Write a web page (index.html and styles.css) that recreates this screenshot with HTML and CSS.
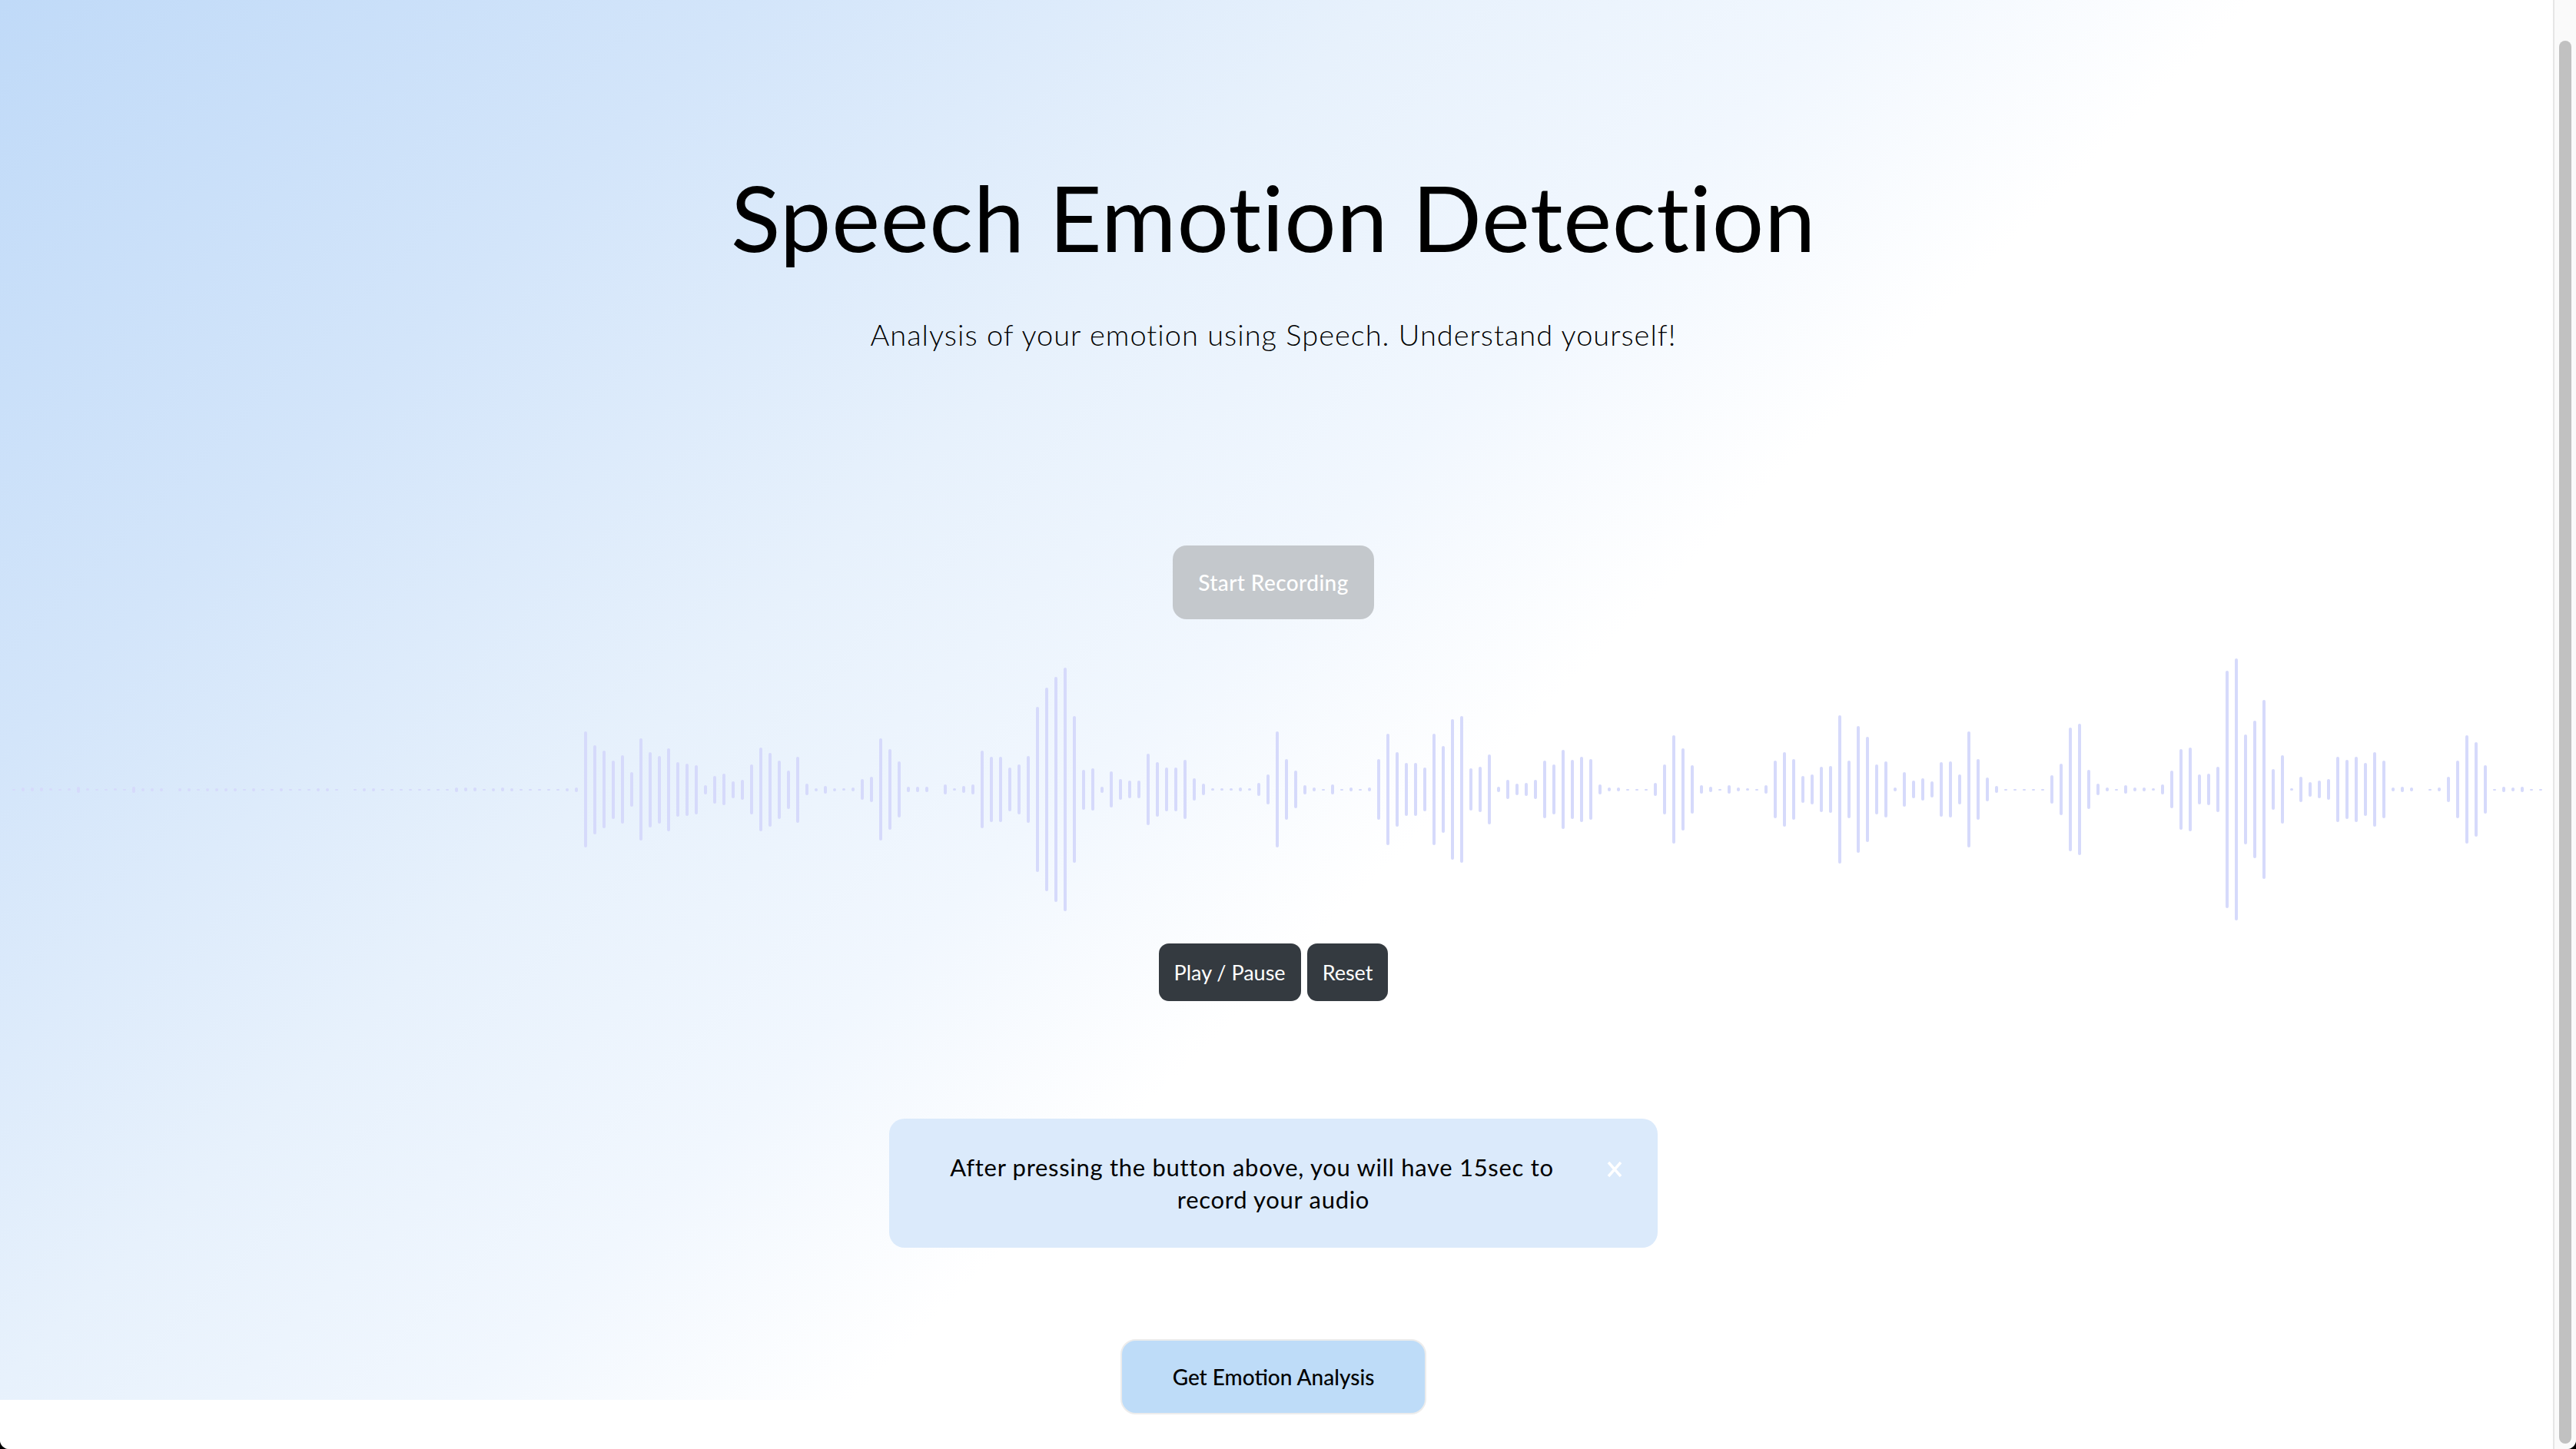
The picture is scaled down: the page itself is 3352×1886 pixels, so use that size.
FILE: index.html
```html
<!DOCTYPE html>
<html lang="en">
<head>
<meta charset="utf-8">
<title>Speech Emotion Detection</title>
<link rel="stylesheet" href="styles.css">
</head>
<body>
<div class="window">
  <main class="page">
    <section class="hero">
      <h1 class="title">Speech Emotion Detection</h1>
      <p class="subtitle">Analysis of your emotion using Speech. Understand yourself!</p>
      <button class="btn btn-record" disabled>Start Recording</button>
      <div class="waveform" id="waveform"></div>
      <div class="controls">
        <button class="btn btn-dark">Play / Pause</button>
        <button class="btn btn-dark">Reset</button>
      </div>
      <div class="alert" role="alert">
        <span class="alert-line alert-line-first">After pressing the button above, you will have 15sec to</span>
        <span class="alert-line">record your audio</span>
        <button class="alert-close" aria-label="Close">
          <svg viewBox="0 0 22 22" width="22" height="22"><path d="M3 2 L19 20 M19 2 L3 20" stroke="#ffffff" stroke-width="3.5" stroke-linecap="butt" fill="none"/></svg>
        </button>
      </div>
      <button class="btn btn-analyze">Get Emotion Analysis</button>
    </section>
  </main>
  <aside class="scrollbar"><div class="scrollbar-thumb"></div></aside>
</div>
<script src="wave.js"></script>
</body>
</html>
```
FILE: styles.css
```css
html {
  background: #000;
}
body {
  margin: 0;
  font-family: "Lato", "Noto Sans", sans-serif;
  font-variant-ligatures: none;
}
.window {
  display: flex;
  height: 1886px;
  overflow: hidden;
  background: #fff;
  border-radius: 0 0 12px 12px;
}
.page {
  flex: 1 1 auto;
  min-width: 0;
  background: #fff;
}
.hero {
  height: 1822px;
  box-sizing: border-box;
  padding: 211px 8px 0 0;
  display: flex;
  flex-direction: column;
  align-items: center;
  background: linear-gradient(135deg, #c0daf8 0%, #d3e5fa 19%, #e7f1fc 35%, #f1f7fe 47%, #ffffff 57%);
}
.hero > * {
  flex-shrink: 0;
}
.title {
  margin: 0;
  font-size: 119px;
  font-weight: 400;
  line-height: 1.2;
  letter-spacing: 0.7px;
  color: #000;
}
.subtitle {
  margin: 54px 0 0;
  font-size: 38px;
  font-weight: 300;
  line-height: 54px;
  letter-spacing: 1px;
  color: #000;
}
.btn {
  font-family: inherit;
  border: 0;
  padding: 0;
  cursor: pointer;
}
.btn-record {
  margin-top: 248px;
  width: 262px;
  height: 96px;
  border-radius: 18px;
  background: #c4c8cc;
  color: #fff;
  font-size: 28px;
  font-weight: 500;
  letter-spacing: 0.4px;
}
.waveform {
  align-self: stretch;
  height: 400px;
  margin-top: 22px;
  display: flex;
  align-items: center;
  gap: 8px;
  padding-left: 16px;
  overflow: hidden;
}
.bar {
  flex: 0 0 4px;
  border-radius: 2px;
  background: #d6dafb;
}
.controls {
  display: flex;
  gap: 8px;
}
.btn-dark {
  height: 75px;
  padding: 0 20px;
  border-radius: 13px;
  background: #343a40;
  color: #fff;
  font-size: 27px;
}
.alert {
  position: relative;
  margin-top: 153px;
  width: 1000px;
  height: 168px;
  box-sizing: border-box;
  display: flex;
  flex-direction: column;
  align-items: center;
  justify-content: center;
  background: #dbeafb;
  border-radius: 20px;
  font-size: 31px;
  line-height: 42px;
  letter-spacing: 0.7px;
  color: #000;
}
.alert-line-first {
  margin-right: 56px;
}
.alert-close {
  position: absolute;
  top: 55px;
  right: 45px;
  width: 22px;
  height: 22px;
  padding: 0;
  border: 0;
  background: none;
  display: flex;
}
.btn-analyze {
  margin-top: 119px;
  width: 398px;
  height: 98px;
  border: 2px solid #ececec;
  border-radius: 20px;
  background: #bedcf8;
  color: #000;
  font-size: 28px;
  font-weight: 500;
}
.scrollbar {
  flex: 0 0 30px;
  box-sizing: border-box;
  background: #fafafa;
  border-left: 2px solid #e6e6e6;
  padding: 53px 6px 7px;
}
.scrollbar-thumb {
  height: 100%;
  border-radius: 8px;
  background: #c1c1c1;
}
```
FILE: wave.js
```js
(function () {
  var heights = [
    2,5,5,5,3,2,3,8,3,2,
    2,3,2,8,4,4,4,0,4,4,
    2,4,4,4,4,2,4,2,2,4,
    2,2,2,4,4,2,0,2,4,4,
    2,2,2,2,2,2,2,2,6,5,
    5,2,4,5,4,2,2,2,2,2,
    4,6,
    151,116,101,76,89,45,133,98,88,108,
    71,68,64,12,36,41,22,26,65,109,
    96,76,50,86,15,4,10,4,3,5,
    27,33,133,105,73,7,7,7,0,13,
    3,9,13,101,85,85,57,65,87,215,
    265,293,317,191,52,55,8,47,27,23,
    23,93,71,57,57,77,29,15,3,3,
    3,5,3,17,39,151,79,49,12,5,
    2,13,2,5,2,5,79,145,97,69,
    69,57,145,113,183,191,55,59,91,7,
    25,15,17,25,75,65,103,77,85,79,
    13,5,5,2,2,2,17,65,141,107,
    63,11,7,2,11,5,3,2,11,75,
    97,79,35,39,59,61,193,75,165,137,
    65,73,5,45,23,29,21,71,73,39,
    151,79,31,9,2,2,2,2,2,37,
    67,161,171,51,15,5,2,11,5,5,
    3,13,49,105,109,39,41,59,309,341,
    143,179,233,53,89,3,33,19,23,27,
    85,77,85,69,97,75,5,7,5,0,
    2,5,33,75,141,123,63,2,7,5,
    7,2,2
  ];
  var wave = document.getElementById('waveform');
  heights.forEach(function (h) {
    var bar = document.createElement('span');
    bar.className = 'bar';
    bar.style.height = h + 'px';
    if (h === 0) { bar.style.visibility = 'hidden'; }
    wave.appendChild(bar);
  });
})();
```
